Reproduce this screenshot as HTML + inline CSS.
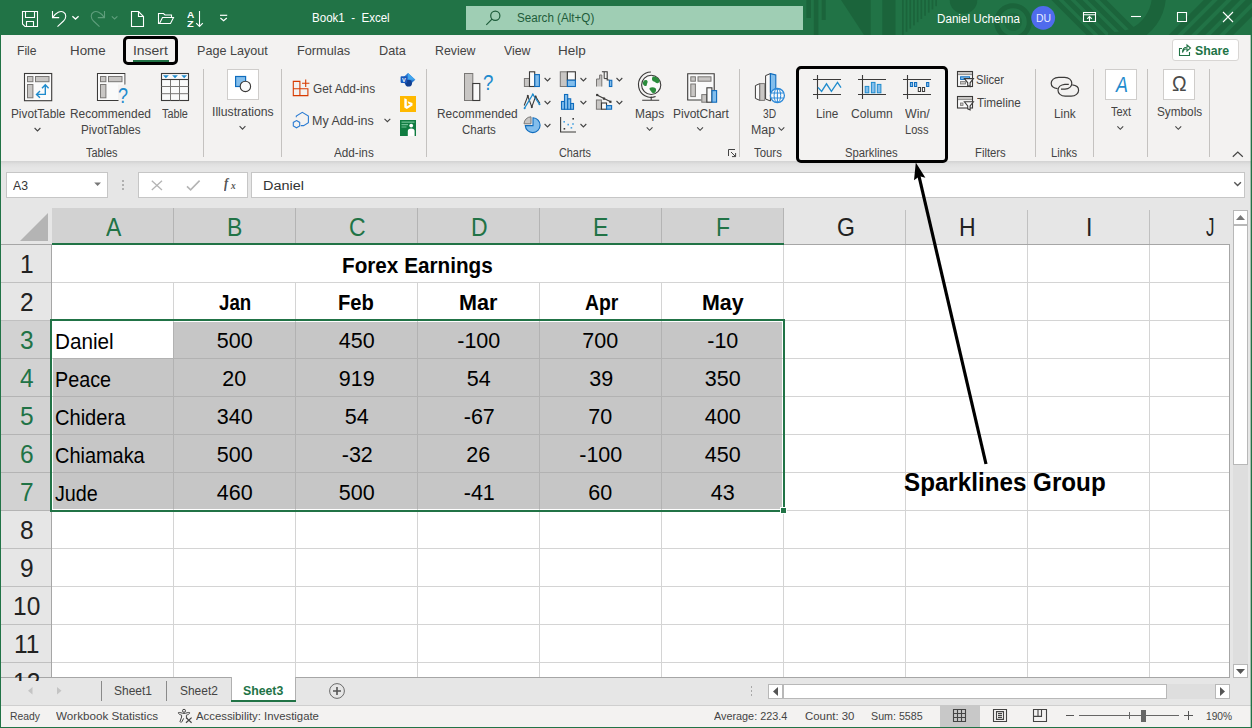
<!DOCTYPE html>
<html lang="en"><head><meta charset="utf-8"><title>Book1 - Excel</title>
<style>
*{box-sizing:border-box;margin:0;padding:0}
html,body{width:1252px;height:728px;overflow:hidden;background:#f3f2f1;font-family:'Liberation Sans',sans-serif}
.a,.t,svg{position:absolute}
.t{white-space:pre;line-height:1;transform-origin:0 0}
svg{overflow:visible}
</style></head>
<body>
<div class="a" style="left:0px;top:0px;width:1252px;height:35px;background:#217346;"></div>
<svg style="left:0;top:0;overflow:hidden" width="1252" height="35" viewBox="0 0 1252 35"><g fill="#1b643b" stroke="none"><rect x="806.4" y="0" width="4.6" height="18"/><rect x="813.8" y="0" width="4.6" height="35"/><rect x="821.7" y="0" width="4" height="20"/><path d="M841 0H870.7V35H864Z"/><rect x="882.3" y="0" width="13.2" height="35"/><rect x="902.0" y="0" width="1.7" height="35.0"/><rect x="905.7" y="0" width="1.7" height="31.8"/><rect x="909.4" y="0" width="1.7" height="28.6"/><rect x="913.1" y="0" width="1.7" height="25.4"/><rect x="916.8" y="0" width="1.7" height="22.2"/><rect x="920.5" y="0" width="1.7" height="19.0"/><rect x="924.2" y="0" width="1.7" height="15.8"/><rect x="927.9" y="0" width="1.7" height="12.6"/><rect x="931.6" y="0" width="1.7" height="9.4"/><rect x="935.3" y="0" width="1.7" height="6.2"/><circle cx="963.5" cy="0" r="13.8"/></g><g fill="none" stroke="#1b643b"><circle cx="1013" cy="22" r="16.3" stroke-width="5"/><circle cx="1013" cy="22" r="6" stroke-width="6" opacity=".6"/><path d="M1153.1 -27A44 44 0 0 1 1107.4 38.3" stroke-width="14"/></g><g fill="none" stroke="#1b643b" stroke-width="5"><path d="M1050 -5L1095 40"/><path d="M1062 -5L1107 40"/><path d="M1074 -5L1119 40"/><path d="M1086 -5L1131 40"/><path d="M1098 -5L1143 40"/></g><g fill="none" stroke="#1b643b" stroke-width="6"><path d="M1168 40L1213 -5"/><path d="M1182 40L1227 -5"/><path d="M1196 40L1241 -5"/><path d="M1210 40L1255 -5"/><path d="M1224 40L1269 -5"/></g></svg>
<div class="a" style="left:466px;top:6px;width:337px;height:24px;background:#9fceb4;"></div>
<div class="a" style="left:0px;top:35px;width:1252px;height:126px;background:#f3f2f1;"></div>
<div class="a" style="left:0px;top:161px;width:1252px;height:47px;background:#e6e6e6;"></div>
<div class="a" style="left:0px;top:161px;width:1252px;height:7px;background:linear-gradient(#d2d2d2,#e0e0e0 45%,#e6e6e6);"></div>
<div class="a" style="left:203px;top:69px;width:1px;height:88px;background:#c4c2c0;"></div>
<div class="a" style="left:281px;top:69px;width:1px;height:88px;background:#c4c2c0;"></div>
<div class="a" style="left:426px;top:69px;width:1px;height:88px;background:#c4c2c0;"></div>
<div class="a" style="left:739px;top:69px;width:1px;height:88px;background:#c4c2c0;"></div>
<div class="a" style="left:1035px;top:69px;width:1px;height:88px;background:#c4c2c0;"></div>
<div class="a" style="left:1093px;top:69px;width:1px;height:88px;background:#c4c2c0;"></div>
<div class="a" style="left:1147px;top:69px;width:1px;height:88px;background:#c4c2c0;"></div>
<div class="a" style="left:1209px;top:69px;width:1px;height:88px;background:#c4c2c0;"></div>
<div class="a" style="left:133px;top:60px;width:36px;height:2px;background:#217346;"></div>
<div class="a" style="left:123px;top:36px;width:55px;height:29px;border:3px solid #000;border-radius:5px"></div>
<div class="a" style="left:796px;top:66px;width:152px;height:97px;border:3px solid #000;border-radius:5px"></div>
<div class="a" style="left:227.2px;top:69.3px;width:31.6px;height:30.4px;background:#fff;border:1px solid #cfcdcb"></div>
<div class="a" style="left:1105.2px;top:69.3px;width:31.6px;height:30.4px;background:#fff;border:1px solid #cfcdcb"></div>
<div class="a" style="left:1163.2px;top:69.3px;width:31.6px;height:30.4px;background:#fff;border:1px solid #cfcdcb"></div>
<div class="a" style="left:1171.8px;top:38.6px;width:66.8px;height:22.8px;background:#fff;border:1px solid #d8d6d4;border-radius:3px"></div>
<div class="a" style="left:6px;top:172px;width:102px;height:26px;background:#fff;border:1px solid #c6c6c6"></div>
<div class="a" style="left:138px;top:172px;width:110px;height:26px;background:#fff;border:1px solid #c6c6c6"></div>
<div class="a" style="left:251px;top:172px;width:994px;height:26px;background:#fff;border:1px solid #c6c6c6"></div>
<div class="a" style="left:122px;top:180px;width:2px;height:2px;background:#b0b0b0;"></div>
<div class="a" style="left:122px;top:184px;width:2px;height:2px;background:#b0b0b0;"></div>
<div class="a" style="left:122px;top:188px;width:2px;height:2px;background:#b0b0b0;"></div>
<div class="a" style="left:52px;top:245px;width:1177px;height:432px;background:#fff;"></div>
<div class="a" style="left:1px;top:208px;width:1229px;height:36px;background:#e6e6e6;"></div>
<div class="a" style="left:1px;top:244px;width:51px;height:433px;background:#e6e6e6;"></div>
<div class="a" style="left:52px;top:208px;width:732px;height:35px;background:#d2d2d2;"></div>
<div class="a" style="left:1px;top:321px;width:50px;height:190px;background:#d2d2d2;"></div>
<div class="a" style="left:53px;top:322px;width:729px;height:187px;background:#c6c6c6;"></div>
<div class="a" style="left:53px;top:322px;width:120px;height:36px;background:#fff;"></div>
<div class="a" style="left:173px;top:245px;width:1px;height:432px;background:#d4d4d4;"></div>
<div class="a" style="left:295px;top:245px;width:1px;height:432px;background:#d4d4d4;"></div>
<div class="a" style="left:417px;top:245px;width:1px;height:432px;background:#d4d4d4;"></div>
<div class="a" style="left:539px;top:245px;width:1px;height:432px;background:#d4d4d4;"></div>
<div class="a" style="left:661px;top:245px;width:1px;height:432px;background:#d4d4d4;"></div>
<div class="a" style="left:783px;top:245px;width:1px;height:432px;background:#d4d4d4;"></div>
<div class="a" style="left:905px;top:245px;width:1px;height:432px;background:#d4d4d4;"></div>
<div class="a" style="left:1027px;top:245px;width:1px;height:432px;background:#d4d4d4;"></div>
<div class="a" style="left:1149px;top:245px;width:1px;height:432px;background:#d4d4d4;"></div>
<div class="a" style="left:52px;top:282px;width:1177px;height:1px;background:#d4d4d4;"></div>
<div class="a" style="left:52px;top:320px;width:1177px;height:1px;background:#d4d4d4;"></div>
<div class="a" style="left:52px;top:358px;width:1177px;height:1px;background:#d4d4d4;"></div>
<div class="a" style="left:52px;top:396px;width:1177px;height:1px;background:#d4d4d4;"></div>
<div class="a" style="left:52px;top:434px;width:1177px;height:1px;background:#d4d4d4;"></div>
<div class="a" style="left:52px;top:472px;width:1177px;height:1px;background:#d4d4d4;"></div>
<div class="a" style="left:52px;top:510px;width:1177px;height:1px;background:#d4d4d4;"></div>
<div class="a" style="left:52px;top:548px;width:1177px;height:1px;background:#d4d4d4;"></div>
<div class="a" style="left:52px;top:586px;width:1177px;height:1px;background:#d4d4d4;"></div>
<div class="a" style="left:52px;top:624px;width:1177px;height:1px;background:#d4d4d4;"></div>
<div class="a" style="left:52px;top:662px;width:1177px;height:1px;background:#d4d4d4;"></div>
<div class="a" style="left:52px;top:245px;width:731px;height:37px;background:#fff;"></div>
<div class="a" style="left:173px;top:322px;width:1px;height:187px;background:#b2b2b2;"></div>
<div class="a" style="left:295px;top:322px;width:1px;height:187px;background:#b2b2b2;"></div>
<div class="a" style="left:417px;top:322px;width:1px;height:187px;background:#b2b2b2;"></div>
<div class="a" style="left:539px;top:322px;width:1px;height:187px;background:#b2b2b2;"></div>
<div class="a" style="left:661px;top:322px;width:1px;height:187px;background:#b2b2b2;"></div>
<div class="a" style="left:53px;top:358px;width:729px;height:1px;background:#b2b2b2;"></div>
<div class="a" style="left:53px;top:396px;width:729px;height:1px;background:#b2b2b2;"></div>
<div class="a" style="left:53px;top:434px;width:729px;height:1px;background:#b2b2b2;"></div>
<div class="a" style="left:53px;top:472px;width:729px;height:1px;background:#b2b2b2;"></div>
<div class="a" style="left:53px;top:358px;width:120px;height:1px;background:#b2b2b2;"></div>
<div class="a" style="left:173px;top:322px;width:1px;height:36px;background:#b2b2b2;"></div>
<div class="a" style="left:173px;top:208px;width:1px;height:35px;background:#b4b4b4;"></div>
<div class="a" style="left:295px;top:208px;width:1px;height:35px;background:#b4b4b4;"></div>
<div class="a" style="left:417px;top:208px;width:1px;height:35px;background:#b4b4b4;"></div>
<div class="a" style="left:539px;top:208px;width:1px;height:35px;background:#b4b4b4;"></div>
<div class="a" style="left:661px;top:208px;width:1px;height:35px;background:#b4b4b4;"></div>
<div class="a" style="left:783px;top:208px;width:1px;height:35px;background:#b4b4b4;"></div>
<div class="a" style="left:905px;top:210px;width:1px;height:34px;background:#c0c0c0;"></div>
<div class="a" style="left:1027px;top:210px;width:1px;height:34px;background:#c0c0c0;"></div>
<div class="a" style="left:1149px;top:210px;width:1px;height:34px;background:#c0c0c0;"></div>
<div class="a" style="left:1px;top:282px;width:50px;height:1px;background:#c0c0c0;"></div>
<div class="a" style="left:1px;top:320px;width:50px;height:1px;background:#c0c0c0;"></div>
<div class="a" style="left:1px;top:358px;width:50px;height:1px;background:#b4b4b4;"></div>
<div class="a" style="left:1px;top:396px;width:50px;height:1px;background:#b4b4b4;"></div>
<div class="a" style="left:1px;top:434px;width:50px;height:1px;background:#b4b4b4;"></div>
<div class="a" style="left:1px;top:472px;width:50px;height:1px;background:#b4b4b4;"></div>
<div class="a" style="left:1px;top:510px;width:50px;height:1px;background:#b4b4b4;"></div>
<div class="a" style="left:1px;top:548px;width:50px;height:1px;background:#c0c0c0;"></div>
<div class="a" style="left:1px;top:586px;width:50px;height:1px;background:#c0c0c0;"></div>
<div class="a" style="left:1px;top:624px;width:50px;height:1px;background:#c0c0c0;"></div>
<div class="a" style="left:1px;top:662px;width:50px;height:1px;background:#c0c0c0;"></div>
<div class="a" style="left:51px;top:244px;width:1px;height:433px;background:#a6a6a6;"></div>
<div class="a" style="left:784px;top:244px;width:446px;height:1px;background:#a6a6a6;"></div>
<div class="a" style="left:1px;top:244px;width:50px;height:1px;background:#a6a6a6;"></div>
<div class="a" style="left:1229px;top:244px;width:1px;height:434px;background:#a6a6a6;"></div>
<div class="a" style="left:1px;top:677px;width:1229px;height:1px;background:#a6a6a6;"></div>
<div class="a" style="left:52px;top:243px;width:732px;height:2px;background:#217346;"></div>
<div class="a" style="left:50px;top:321px;width:2px;height:190px;background:#217346;"></div>
<svg style="left:20px;top:213px" width="28" height="28"><path d="M28 0V28H0Z" fill="#b4b4b4"/></svg>
<div class="a" style="left:50px;top:319px;width:735px;height:2px;background:#217346;"></div>
<div class="a" style="left:50px;top:319px;width:2px;height:193px;background:#217346;"></div>
<div class="a" style="left:783px;top:319px;width:2px;height:188px;background:#217346;"></div>
<div class="a" style="left:50px;top:510px;width:730px;height:2px;background:#217346;"></div>
<div class="a" style="left:780px;top:507px;width:7px;height:7px;background:#fff;"></div>
<div class="a" style="left:781px;top:508px;width:5px;height:5px;background:#217346;"></div>
<div class="a" style="left:1230px;top:208px;width:21px;height:470px;background:#e6e6e6;"></div>
<div class="a" style="left:1233px;top:225px;width:15px;height:440px;background:#dedede;"></div>
<div class="a" style="left:1233px;top:210px;width:15px;height:15px;background:#fff;border:1px solid #b8b8b8"></div>
<div class="a" style="left:1233px;top:225px;width:15px;height:240px;background:#fff;border:1px solid #b8b8b8"></div>
<div class="a" style="left:1233px;top:664px;width:15px;height:14px;background:#fff;border:1px solid #b8b8b8"></div>
<svg style="left:1236px;top:215px" width="9" height="5"><path d="M0 5L4.5 0L9 5Z" fill="#777"/></svg>
<svg style="left:1236px;top:669px" width="9" height="5"><path d="M0 0L4.5 5L9 0Z" fill="#555"/></svg>
<div class="a" style="left:1px;top:678px;width:1250px;height:27px;background:#e6e6e6;"></div>
<div class="a" style="left:231px;top:677px;width:65px;height:24px;background:#fff;border-left:1px solid #b0b0b0;border-right:1px solid #b0b0b0"></div>
<div class="a" style="left:231px;top:700px;width:65px;height:2px;background:#217346;"></div>
<div class="a" style="left:101px;top:681px;width:1px;height:20px;background:#8a8a8a;"></div>
<div class="a" style="left:166px;top:681px;width:1px;height:20px;background:#8a8a8a;"></div>
<div class="a" style="left:750.5px;top:686.3px;width:1.6px;height:1.8px;background:#a8a8a8;"></div>
<div class="a" style="left:750.5px;top:690.3px;width:1.6px;height:1.8px;background:#a8a8a8;"></div>
<div class="a" style="left:750.5px;top:694.3px;width:1.6px;height:1.8px;background:#a8a8a8;"></div>
<div class="a" style="left:768px;top:684px;width:15px;height:15px;background:#fff;border:1px solid #b8b8b8"></div>
<div class="a" style="left:783px;top:684px;width:384px;height:15px;background:#fff;border:1px solid #b8b8b8"></div>
<div class="a" style="left:1167px;top:684px;width:48px;height:15px;background:#dedede;"></div>
<div class="a" style="left:1215px;top:684px;width:15px;height:15px;background:#fff;border:1px solid #b8b8b8"></div>
<svg style="left:773px;top:687px" width="5" height="9"><path d="M5 0L0 4.5L5 9Z" fill="#555"/></svg>
<svg style="left:1220px;top:687px" width="5" height="9"><path d="M0 0L5 4.5L0 9Z" fill="#555"/></svg>
<svg style="left:27.6px;top:686.6px" width="5" height="8"><path d="M4.5 0L0 3.8L4.5 7.6Z" fill="#c4c4c4"/></svg>
<svg style="left:56.6px;top:686.6px" width="5" height="8"><path d="M0 0L4.5 3.8L0 7.6Z" fill="#c4c4c4"/></svg>
<svg style="left:329px;top:683px" width="16" height="16"><circle cx="8" cy="8" r="7.4" fill="none" stroke="#6a6a6a" stroke-width="1"/><path d="M4 8H12M8 4V12" stroke="#555" stroke-width="1.6"/></svg>
<div class="a" style="left:1px;top:705px;width:1250px;height:22px;background:#f3f2f1;"></div>
<div class="a" style="left:1px;top:705px;width:1250px;height:1px;background:#cfcfcf;"></div>
<div class="a" style="left:940px;top:705px;width:40px;height:22px;background:#c8c8c8;"></div>
<div class="a" style="left:1079px;top:715px;width:100px;height:1px;background:#666;"></div>
<div class="a" style="left:1129px;top:712px;width:1px;height:7px;background:#666;"></div>
<div class="a" style="left:1141px;top:710px;width:5px;height:12px;background:#666;"></div>
<div class="a" style="left:1066px;top:715px;width:8px;height:1px;background:#555;"></div>
<div class="a" style="left:1184px;top:715px;width:9px;height:1px;background:#555;"></div>
<div class="a" style="left:1188px;top:711px;width:1px;height:9px;background:#555;"></div>
<div class="a" style="left:0px;top:35px;width:1px;height:693px;background:#217346;"></div>
<div class="a" style="left:1251px;top:35px;width:1px;height:693px;background:#217346;"></div>
<div class="a" style="left:1250px;top:35px;width:1px;height:693px;background:rgba(33,115,70,.35);"></div>
<div class="a" style="left:0px;top:727px;width:1252px;height:1px;background:#217346;"></div>
<svg style="left:0;top:0" width="1252" height="728"><path d="M986 464L918.6 174.5" stroke="#000" stroke-width="3.2" fill="none"/><path d="M915.8 162.5L925.4 177.8L919.6 176.2L914 180.2Z" fill="#000"/></svg>
<svg style="left:0;top:0" width="1252" height="728" viewBox="0 0 1252 728" fill="none">
<g stroke="#fff" stroke-width="1.1" fill="none">
<path d="M22.5 11.5H37.5V26.5H25L22.5 24Z"/><path d="M25.5 11.5V17.5H34.5V11.5"/><path d="M26.5 26.5V21.5H33.5V26.5"/>
<path d="M52.5 11V17.6H59.2"/><path d="M52.8 17.4C56 12.5 60.5 10.4 63.6 12.2C66.6 14 66.4 18 63.5 21L57.5 26.6"/>
<path d="M72.4 16.3L75.5 19.1L78.60000000000001 16.3" fill="none" stroke="#fff" stroke-width="1.3"/>
<path d="M131.5 11.5H138.5L143.5 16.5V26.5H131.5Z"/><path d="M138.5 11.5V16.5H143.5"/>
<path d="M160 23.5H158.5V13.5H163.5L165 15H171.5V17.5"/><path d="M159.5 23.5L162.5 17.5H173.5L170.5 23.5Z"/>
<path d="M199.5 11V26.4M196.2 23.2L199.5 26.5L202.8 23.2"/>
<path d="M220 15.3H227.2" stroke-width="1.2"/><path d="M220.4 18L223.6 20.8L226.8 18" fill="none" stroke="#fff" stroke-width="1.2"/>
</g>
<g stroke="#5f9e7c" stroke-width="1.1" fill="none"><path d="M104.5 11V17.6H97.8"/><path d="M104.2 17.4C101 12.5 96.5 10.4 93.4 12.2C90.4 14 90.6 18 93.5 21L99.5 26.6"/><path d="M111.8 16.3L114.6 18.900000000000002L117.39999999999999 16.3" fill="none" stroke="#5f9e7c" stroke-width="1.1"/></g>
<g stroke="#1e5c3a" stroke-width="1.2"><circle cx="495.3" cy="15.8" r="4.6"/><path d="M492 19.2L486.3 24.9"/></g>
<circle cx="1043.2" cy="17.8" r="11.9" fill="#4f6bed"/>
<g stroke="#fff" stroke-width="1.1"><path d="M1083.5 12.5H1095.5V21.5H1083.5Z"/><path d="M1083.5 14.7H1095.5M1089.5 21.5V16.6M1087.2 18.8L1089.5 16.5L1091.8 18.8"/>
<path d="M1131 16.5H1141"/><path d="M1177.5 12.5H1186.5V21.5H1177.5Z"/><path d="M1223 12L1233 22M1233 12L1223 22"/></g>
<g stroke="#217346" stroke-width="1.1"><path d="M1182 48.5H1179.5V55.5H1189.5V52"/><path d="M1182.5 52.5C1182.5 49 1184.5 47.3 1187 47.3V45L1190.5 48L1187 51V48.8C1185 48.8 1183.5 49.8 1182.5 52.5Z"/></g>
<rect x="24.5" y="73.5" width="27.2" height="27.2" fill="#fafafa" stroke="#3b3a39" stroke-width="1.1"/><g fill="#c8c6c4" stroke="#797775" stroke-width="1"><rect x="27.5" y="76.5" width="5.4" height="5.2"/><rect x="35.5" y="76.5" width="13.5" height="5.2"/><rect x="27.5" y="84.5" width="5.4" height="13.3"/></g>
<path d="M45.3 85V94.4H36.6M42 88.2L45.3 84.8L48.6 88.2M40 91L36.5 94.4L40 97.8" stroke="#1e8bcd" stroke-width="1.4"/>
<path d="M124.8 84.5V73.5H97.5V100.5H118.5" fill="none" stroke="#3b3a39" stroke-width="1.1"/><path d="M98 74H124.3V84.5H118V100H98Z" fill="#fafafa"/>
<g fill="#c8c6c4" stroke="#797775" stroke-width="1"><rect x="100.5" y="76.5" width="5.4" height="5.2"/><rect x="108.5" y="76.5" width="13.5" height="5.2"/><rect x="100.5" y="84.5" width="5.4" height="13.3"/></g>
<rect x="161.5" y="73.5" width="27" height="27" fill="#fafafa" stroke="#3b3a39" stroke-width="1.1"/>
<path d="M161.5 86.5H188.5M161.5 93.7H188.5M170.5 79.5V100.5M179.5 79.5V100.5" stroke="#797775" stroke-width="1"/><path d="M161.5 79.5H188.5" stroke="#3b3a39" stroke-width="1.1"/>
<path d="M163.0 75.2H168.8L165.9 78.2Z" fill="#1e8bcd"/>
<path d="M172.1 75.2H177.9L175 78.2Z" fill="#1e8bcd"/>
<path d="M181.29999999999998 75.2H187.1L184.2 78.2Z" fill="#1e8bcd"/>
<path d="M34.6 128L37.5 130.9L40.4 128" fill="none" stroke="#444" stroke-width="1.1"/>
<path d="M239.6 126.2L242.5 129.1L245.4 126.2" fill="none" stroke="#444" stroke-width="1.1"/>
<path d="M646.7 127.4L649.6 130.3L652.5 127.4" fill="none" stroke="#444" stroke-width="1.1"/>
<path d="M697.2 127.4L700.1 130.3L703.0 127.4" fill="none" stroke="#444" stroke-width="1.1"/>
<path d="M1117.4 126.4L1120.3000000000002 129.3L1123.2 126.4" fill="none" stroke="#444" stroke-width="1.1"/>
<path d="M1175.4 126.4L1178.3000000000002 129.3L1181.2 126.4" fill="none" stroke="#444" stroke-width="1.1"/>
<path d="M778.5 127.4L781.4 130.3L784.3 127.4" fill="none" stroke="#444" stroke-width="1.1"/>
<path d="M384.5 118.8L387.4 121.7L390.3 118.8" fill="none" stroke="#444" stroke-width="1.1"/>
<path d="M544.6 78L547.5 80.9L550.4 78" fill="none" stroke="#444" stroke-width="1.1"/>
<path d="M544.6 101L547.5 103.9L550.4 101" fill="none" stroke="#444" stroke-width="1.1"/>
<path d="M580.5 78L583.4 80.9L586.3 78" fill="none" stroke="#444" stroke-width="1.1"/>
<path d="M580.5 101L583.4 103.9L586.3 101" fill="none" stroke="#444" stroke-width="1.1"/>
<path d="M616.5 78L619.4 80.9L622.3 78" fill="none" stroke="#444" stroke-width="1.1"/>
<path d="M616.5 101L619.4 103.9L622.3 101" fill="none" stroke="#444" stroke-width="1.1"/>
<path d="M544.6 124L547.5 126.9L550.4 124" fill="none" stroke="#444" stroke-width="1.1"/>
<path d="M580.5 124L583.4 126.9L586.3 124" fill="none" stroke="#444" stroke-width="1.1"/>
<rect x="235.6" y="76.5" width="10" height="10" fill="#83beec" stroke="#0f6cbd" stroke-width="1.2"/><circle cx="245.4" cy="86.4" r="5.2" fill="#fafafa" stroke="#3b3a39" stroke-width="1.1"/>
<path d="M293.3 81.4H299.9V95.6H293.3ZM293.3 88.8H307.9V95.6H299.9" stroke="#d83b01" stroke-width="1.1"/><path d="M305.7 79.6V87M302 83.3H309.4" stroke="#d83b01" stroke-width="1.1"/>
<path d="M296.3 117.2V116L302.3 112.3L308.4 116V122.6L303.6 125.6H300.8" stroke="#2b7cd3" stroke-width="1.1"/><path d="M296.5 120.6L299.7 122.4V126L296.5 127.8L293.3 126V122.4Z" stroke="#2b7cd3" stroke-width="1.1"/>
<path d="M408 73L415.3 79.8L408 86.5L400.8 79.8Z" fill="#2b7cd3"/><path d="M408 73L415.3 79.8H408Z" fill="#41a5ee"/><circle cx="408.6" cy="83.2" r="3.4" fill="#103f91"/><rect x="400.6" y="76.3" width="6.6" height="6.6" rx=".8" fill="#185abd"/>
<rect x="400" y="96" width="16" height="16" fill="#ffb900"/><path d="M404.3 98.3L406.8 99.2V106.3L410.2 104.5L408.4 103.6L407.5 101.2L412.5 103V105.6L406.8 109L404.3 107.6Z" fill="#fff"/>
<rect x="400" y="120" width="16" height="16" fill="#107c41"/><path d="M401.5 122.2H414.5M401.5 124.6H408M401.5 127H406.5" stroke="#6fbf93" stroke-width="1.2"/><circle cx="411.2" cy="125.6" r="1.9" fill="#fff"/><path d="M407.8 136V131C407.8 129.3 409 128.4 411.2 128.4C413.4 128.4 414.6 129.3 414.6 131V136Z" fill="#fff"/>
<rect x="464.5" y="73.5" width="8.3" height="27" fill="#c8c6c4" stroke="#797775" stroke-width="1"/><rect x="472.8" y="83.5" width="7" height="17" fill="#fafafa" stroke="#3b3a39" stroke-width="1.1"/>
<rect x="524.4" y="78.5" width="5" height="8" fill="#c8c6c4" stroke="#797775"/><rect x="529.5" y="71.8" width="5.2" height="14.7" fill="#fafafa" stroke="#3b3a39" stroke-width="1.1"/><rect x="534.8" y="74.6" width="4.6" height="11.9" fill="#83beec" stroke="#0f6cbd" stroke-width="1.1"/>
<rect x="560.3" y="71.8" width="7" height="14.7" fill="#c8c6c4" stroke="#797775"/><rect x="567.4" y="71.8" width="8" height="8.4" fill="#fafafa" stroke="#3b3a39" stroke-width="1.1"/><rect x="567.4" y="80.2" width="8" height="6.3" fill="#83beec" stroke="#0f6cbd" stroke-width="1.1"/>
<path d="M596.5 86.5V79H599.6V75H601.8V86.5" stroke="#797775" stroke-width="1" fill="#c8c6c4"/><path d="M601.9 71.8H607.2V80H609.3" stroke="#3b3a39" stroke-width="1.1"/><path d="M604.2 71.8V78.6H607.2" stroke="#3b3a39" stroke-width="1"/><rect x="609.4" y="80.3" width="2.4" height="6.2" fill="#83beec" stroke="#0f6cbd" stroke-width="1.1"/>
<path d="M524.2 105.5L527.8 96L531.8 107L535.6 96.6L539.8 103.2" stroke="#3b3a39" stroke-width="1.1"/><path d="M524.4 108.4L532.8 94.4L539.6 104.4" stroke="#1e8bcd" stroke-width="1.2"/>
<rect x="526.9" y="95.1" width="1.8" height="1.8" fill="#3b3a39"/>
<rect x="530.9" y="106.1" width="1.8" height="1.8" fill="#3b3a39"/>
<rect x="534.7" y="95.69999999999999" width="1.8" height="1.8" fill="#3b3a39"/>
<circle cx="524.6" cy="108.2" r="1" fill="#1e8bcd"/>
<circle cx="532.8" cy="94.6" r="1" fill="#1e8bcd"/>
<circle cx="539.5" cy="104.2" r="1" fill="#1e8bcd"/>
<g fill="#83beec" stroke="#0f6cbd" stroke-width="1.1"><rect x="561.5" y="101.5" width="3" height="7.8"/><rect x="564.5" y="94.5" width="3.2" height="14.8"/><rect x="567.7" y="98.8" width="3" height="10.5"/><rect x="570.7" y="103.5" width="2.8" height="5.8"/></g>
<rect x="596.4" y="100" width="5" height="9.2" fill="#c8c6c4" stroke="#797775"/><rect x="601.5" y="103" width="5" height="6.2" fill="#fafafa" stroke="#3b3a39" stroke-width="1.1"/><rect x="606.6" y="105.6" width="5" height="3.6" fill="#83beec" stroke="#0f6cbd" stroke-width="1.1"/><path d="M597 95L604 98.6L610.6 101.8" stroke="#3b3a39" stroke-width="1.1"/>
<rect x="596.1" y="93.9" width="2.2" height="2.2" fill="#3b3a39"/>
<rect x="602.9" y="97.5" width="2.2" height="2.2" fill="#3b3a39"/>
<rect x="609.3" y="100.7" width="2.2" height="2.2" fill="#3b3a39"/>
<path d="M533 117.8A7.4 7.4 0 1 1 525.3 125.6H533Z" fill="#83beec" stroke="#0f6cbd" stroke-width="1.1"/><path d="M531 116.8A7.2 7.2 0 0 0 524 123.8H531Z" fill="#c8c6c4" stroke="#797775" stroke-width="1"/>
<path d="M560.6 117V132H576" stroke="#3b3a39" stroke-width="1.1"/>
<rect x="572.4000000000001" y="118.0" width="1.6" height="1.6" fill="#3b3a39"/>
<rect x="563.6" y="128.0" width="1.6" height="1.6" fill="#3b3a39"/>
<rect x="563.4000000000001" y="121.0" width="1.6" height="1.6" fill="#4aa3e0"/>
<rect x="567.4000000000001" y="123.8" width="1.6" height="1.6" fill="#4aa3e0"/>
<rect x="570.6" y="127.0" width="1.6" height="1.6" fill="#4aa3e0"/>
<rect x="572.2" y="123.2" width="1.6" height="1.6" fill="#4aa3e0"/>
<circle cx="651.2" cy="84.9" r="9.6" fill="#fafafa" stroke="#3b3a39" stroke-width="1.1"/>
<path d="M644 80.5C645.5 79.5 647 80 647.6 81.2C648 82.6 646.5 84 646.8 85.6C646 86.4 644.2 86 643.3 84.8C642.6 83.4 643 81.6 644 80.5Z" fill="#2a8c3c"/><path d="M652.6 76.6C655 76 658 77.4 659.4 80C660 81.6 659.2 83 657.6 83.2C656 83.4 655.4 82 654 81.6C652.6 81 651.8 79.8 652 78.4Z" fill="#2a8c3c"/><path d="M649.6 88C651.4 86.8 654 87 655.6 88.2C656.6 89.6 656.2 91.6 654.8 92.8C653.4 93.6 652 93 651.2 91.6C650.6 90.4 649 89.6 649.6 88Z" fill="#2a8c3c"/>
<path d="M650.9 72A12.7 12.7 0 1 0 655.6 96.6" stroke="#3b3a39" stroke-width="1.1"/><path d="M651.2 96.6V100.2M642.2 100.3H659.2" stroke="#3b3a39" stroke-width="1.1"/>
<path d="M701.5 100H687.7V73.8H714.2V90" fill="#fafafa" stroke="#3b3a39" stroke-width="1.1"/>
<g fill="#c8c6c4" stroke="#797775" stroke-width="1"><rect x="690.8" y="76.8" width="4.6" height="4.4"/><rect x="698" y="76.8" width="13" height="4.4"/><rect x="690.8" y="84" width="4.6" height="12.6"/></g>
<rect x="701.8" y="94.6" width="5" height="7.6" fill="#c8c6c4" stroke="#797775"/><rect x="706.9" y="87.8" width="5" height="14.4" fill="#fafafa" stroke="#3b3a39" stroke-width="1.1"/><rect x="712" y="90.6" width="4.6" height="11.6" fill="#83beec" stroke="#0f6cbd" stroke-width="1.1"/>
<path d="M728.5 156V149.5H735M731 152L735.5 156.5M735.6 153V156.6H732" stroke="#444" stroke-width="1"/>
<path d="M755.4 85.6L759.8 83.6V100.4L755.4 98.4Z" fill="#fafafa" stroke="#3b3a39" stroke-width="1"/><path d="M759.8 83.6H764.8V100.4H759.8Z" fill="#c8c6c4" stroke="#797775" stroke-width="1"/>
<path d="M765.6 75.6L770.4 73.6V101L765.6 99Z" fill="#fafafa" stroke="#3b3a39" stroke-width="1"/><path d="M770.4 73.6L775.8 75V92H770.4Z" fill="#83beec" stroke="#0f6cbd" stroke-width="1.1"/>
<circle cx="777.4" cy="95.5" r="7" fill="#fafafa" stroke="#2b88d8" stroke-width="1.3"/><ellipse cx="777.4" cy="95.5" rx="3.3" ry="7" stroke="#2b88d8" stroke-width="1"/><path d="M771 93H783.8M771 98H783.8M777.4 88.5V102.5" stroke="#2b88d8" stroke-width="1"/>
<path d="M813 79.5H841M813 94.5H841M817.5 75V99" stroke="#3b3a39" stroke-width="1.1"/>
<path d="M858 79.5H886M858 94.5H886M862.5 75V99" stroke="#3b3a39" stroke-width="1.1"/>
<path d="M903 79.5H931M903 94.5H931M907.5 75V99" stroke="#3b3a39" stroke-width="1.1"/>
<path d="M818 87.4L821.6 91.4L826.5 83.8L831.4 91.4L837.5 82.4L841 87.6" stroke="#1e8bcd" stroke-width="1.3"/>
<g fill="#83beec" stroke="#1e8bcd" stroke-width="1"><rect x="865.2" y="86.4" width="3.6" height="6.4"/><rect x="871.4" y="82.4" width="3.6" height="10.4"/><rect x="877.3" y="84.4" width="3.6" height="8.4"/></g>
<g stroke="#0f6cbd" stroke-width="1" fill="#83beec"><rect x="910.4" y="82.5" width="2.2" height="4"/><rect x="914.5" y="82.5" width="2.2" height="4"/><rect x="926.6" y="82.5" width="2.2" height="4"/></g><g stroke="#3b3a39" stroke-width="1" fill="#fafafa"><rect x="918.3" y="87.5" width="2.2" height="4"/><rect x="922.4" y="87.5" width="2.2" height="4"/></g>
<rect x="957.5" y="71.5" width="15" height="15" fill="#fafafa" stroke="#3b3a39" stroke-width="1.1"/><rect x="958" y="72" width="14" height="2.4" fill="#c8c6c4"/><path d="M958 74.6H972" stroke="#797775" stroke-width=".8"/><rect x="960.6" y="76.8" width="9" height="2.6" fill="#83beec" stroke="#0f6cbd" stroke-width="1"/><rect x="960.6" y="81.6" width="5" height="2.4" fill="#c8c6c4" stroke="#797775" stroke-width=".8"/>
<path d="M964.4 78.6H973.4L970.1 82.8V86.6L967.6999999999999 85.6V82.8Z" fill="#fafafa" stroke="#3b3a39" stroke-width="1.1"/>
<rect x="957.5" y="96.5" width="15" height="11.5" fill="#fafafa" stroke="#3b3a39" stroke-width="1.1"/><rect x="958" y="97" width="14" height="2.4" fill="#c8c6c4"/><path d="M958 99.6H972" stroke="#797775" stroke-width=".8"/><rect x="960.6" y="103" width="2.4" height="2.4" fill="#c8c6c4" stroke="#797775" stroke-width=".8"/>
<path d="M964.4 101.8H973.4L970.1 106.0V109.8L967.6999999999999 108.8V106.0Z" fill="#fafafa" stroke="#3b3a39" stroke-width="1.1"/>
<path d="M1057.5 88.6C1053.5 88.2 1051.2 86 1051.2 83.3C1051.2 80 1054.2 77.4 1058.6 77.4H1064.6C1069 77.4 1071.8 80 1071.8 83.3C1071.8 86.4 1069 88.9 1065 89.2H1061" stroke="#3b3a39" stroke-width="1.2"/><path d="M1072.2 84.9C1076.2 85.3 1078.6 87.5 1078.6 90.2C1078.6 93.5 1075.6 96.1 1071.2 96.1H1065.2C1060.8 96.1 1058 93.5 1058 90.2C1058 87.1 1060.8 84.6 1064.8 84.3H1068.8" stroke="#3b3a39" stroke-width="1.2"/>
<path d="M1232.8 156.8L1237.8 152L1242.8 156.8" stroke="#444" stroke-width="1.2"/>
<path d="M151.8 180.8L162 190M162 180.8L151.8 190" stroke="#b4b4b4" stroke-width="1.3"/><path d="M187 186.4L190.6 189.8L199.6 180.6" stroke="#b4b4b4" stroke-width="1.6"/>
<path d="M94.2 182.5H101L97.6 186Z" fill="#777"/>
<path d="M1234.3 182.3L1237.6 185.6L1240.9 182.3" stroke="#555" stroke-width="1.4"/>
<g stroke="#444" stroke-width="1.1"><path d="M953.5 709.5H965.5V721.5H953.5ZM957.5 709.5V721.5M961.5 709.5V721.5M953.5 713.5H965.5M953.5 717.5H965.5"/>
<path d="M993.5 709.5H1006.5V721.5H993.5ZM996.5 711.6H1003.5V719.4H996.5ZM998 713.6H1002M998 715.5H1002M998 717.4H1002"/>
<path d="M1033.5 709.5H1046.5V721.5H1033.5ZM1038 709.5V716.4M1041.5 709.5V716.4H1033.5"/></g>
<g stroke="#444" stroke-width="1"><circle cx="184" cy="710.8" r="1.5"/><path d="M178.4 712.6C180 712 181.6 713.4 184 713.4C186.4 713.4 188 712 189.6 712.6C190.2 713.6 188 714.6 186.4 715.2V717L187.4 719M181.6 715.2C180 714.6 177.8 713.6 178.4 712.6M181.6 715.2V717L180 721.6C180.6 722.6 181.6 722.4 182 721.6L183.6 718.4"/><path d="M186 717.6L191.6 722.8M191.6 717.6L186 722.8" stroke-width="1.2"/></g>
</svg>
<span class="t" style="left:311.61px;top:11.00px;font-size:13px;color:#fff;transform:scaleX(0.8886);">Book1  -  Excel</span>
<span class="t" style="left:516.50px;top:12.00px;font-size:12.5px;color:#1e5c3a;transform:scaleX(0.9306);">Search (Alt+Q)</span>
<span class="t" style="left:936.77px;top:13.00px;font-size:12.5px;color:#fff;transform:scaleX(0.9319);">Daniel Uchenna</span>
<span class="t" style="left:1035.90px;top:13.00px;font-size:10.5px;color:#e8ebff;transform:scaleX(0.9943);">DU</span>
<span class="t" style="left:17.07px;top:44.00px;font-size:13px;color:#444;transform:scaleX(0.9332);">File</span>
<span class="t" style="left:69.57px;top:44.00px;font-size:13px;color:#444;transform:scaleX(1.0255);">Home</span>
<span class="t" style="left:132.63px;top:44.00px;font-size:13px;color:#444;transform:scaleX(1.0721);">Insert</span>
<span class="t" style="left:197.03px;top:44.00px;font-size:13px;color:#444;transform:scaleX(0.9683);">Page Layout</span>
<span class="t" style="left:297.12px;top:44.00px;font-size:13px;color:#444;transform:scaleX(0.9799);">Formulas</span>
<span class="t" style="left:379.22px;top:44.00px;font-size:13px;color:#444;transform:scaleX(0.9769);">Data</span>
<span class="t" style="left:435.25px;top:44.00px;font-size:13px;color:#444;transform:scaleX(0.9471);">Review</span>
<span class="t" style="left:504.10px;top:44.00px;font-size:13px;color:#444;transform:scaleX(0.9491);">View</span>
<span class="t" style="left:558.36px;top:44.00px;font-size:13px;color:#444;transform:scaleX(1.0390);">Help</span>
<span class="t" style="left:1195.20px;top:44.00px;font-size:13px;color:#217346;transform:scaleX(0.9471);font-weight:700;">Share</span>
<span class="t" style="left:10.64px;top:108.00px;font-size:12.3px;color:#444;transform:scaleX(0.9589);">PivotTable</span>
<span class="t" style="left:69.63px;top:108.00px;font-size:12.3px;color:#444;transform:scaleX(0.9703);">Recommended</span>
<span class="t" style="left:80.55px;top:124.00px;font-size:12.3px;color:#444;transform:scaleX(0.9460);">PivotTables</span>
<span class="t" style="left:162.10px;top:108.00px;font-size:12.3px;color:#444;transform:scaleX(0.8796);">Table</span>
<span class="t" style="left:86.20px;top:147.00px;font-size:12.3px;color:#444;transform:scaleX(0.8871);">Tables</span>
<span class="t" style="left:211.71px;top:106.00px;font-size:12.3px;color:#444;transform:scaleX(0.9911);">Illustrations</span>
<span class="t" style="left:312.60px;top:83.00px;font-size:12.3px;color:#444;transform:scaleX(0.9663);">Get Add-ins</span>
<span class="t" style="left:311.59px;top:115.00px;font-size:12.3px;color:#444;transform:scaleX(1.0140);">My Add-ins</span>
<span class="t" style="left:334.20px;top:147.00px;font-size:12.3px;color:#444;transform:scaleX(0.9532);">Add-ins</span>
<span class="t" style="left:436.73px;top:108.00px;font-size:12.3px;color:#444;transform:scaleX(0.9679);">Recommended</span>
<span class="t" style="left:461.50px;top:124.00px;font-size:12.3px;color:#444;transform:scaleX(0.9343);">Charts</span>
<span class="t" style="left:558.90px;top:147.00px;font-size:12.3px;color:#444;transform:scaleX(0.8816);">Charts</span>
<span class="t" style="left:634.83px;top:108.00px;font-size:12.3px;color:#444;transform:scaleX(0.9716);">Maps</span>
<span class="t" style="left:672.53px;top:108.00px;font-size:12.3px;color:#444;transform:scaleX(0.9738);">PivotChart</span>
<span class="t" style="left:762.60px;top:108.00px;font-size:12.3px;color:#444;transform:scaleX(0.8334);">3D</span>
<span class="t" style="left:750.59px;top:124.00px;font-size:12.3px;color:#444;transform:scaleX(1.0094);">Map</span>
<span class="t" style="left:754.20px;top:147.00px;font-size:12.3px;color:#444;transform:scaleX(0.9258);">Tours</span>
<span class="t" style="left:815.85px;top:108.00px;font-size:12.3px;color:#444;transform:scaleX(0.9549);">Line</span>
<span class="t" style="left:850.80px;top:108.00px;font-size:12.3px;color:#444;transform:scaleX(0.9851);">Column</span>
<span class="t" style="left:904.50px;top:108.00px;font-size:12.3px;color:#444;transform:scaleX(1.0049);">Win/</span>
<span class="t" style="left:904.70px;top:124.00px;font-size:12.3px;color:#444;transform:scaleX(0.9023);">Loss</span>
<span class="t" style="left:845.20px;top:147.00px;font-size:12.3px;color:#444;transform:scaleX(0.9168);">Sparklines</span>
<span class="t" style="left:976.20px;top:74.00px;font-size:12.3px;color:#444;transform:scaleX(0.9134);">Slicer</span>
<span class="t" style="left:977.10px;top:97.00px;font-size:12.3px;color:#444;transform:scaleX(0.9530);">Timeline</span>
<span class="t" style="left:974.88px;top:147.00px;font-size:12.3px;color:#444;transform:scaleX(0.9188);">Filters</span>
<span class="t" style="left:1053.74px;top:108.00px;font-size:12.3px;color:#444;transform:scaleX(0.9594);">Link</span>
<span class="t" style="left:1050.89px;top:147.00px;font-size:12.3px;color:#444;transform:scaleX(0.9108);">Links</span>
<span class="t" style="left:1110.70px;top:106.00px;font-size:12.3px;color:#444;transform:scaleX(0.8947);">Text</span>
<span class="t" style="left:1156.50px;top:106.00px;font-size:12.3px;color:#444;transform:scaleX(0.9574);">Symbols</span>
<span class="t" style="left:13.30px;top:180.00px;font-size:12px;color:#333;transform:scaleX(1.0197);">A3</span>
<span class="t" style="left:262.64px;top:180.00px;font-size:12.5px;color:#333;transform:scaleX(1.1557);">Daniel</span>
<span class="t" style="left:224.40px;top:177.00px;font-size:14px;color:#555;transform:scaleX(0.9000);font-weight:700;font-style:italic;font-family:'Liberation Serif',serif;">f</span>
<span class="t" style="left:230.53px;top:181.00px;font-size:10px;color:#555;transform:scaleX(0.9333);font-weight:700;font-style:italic;font-family:'Liberation Serif',serif;">x</span>
<span class="t" style="left:482.50px;top:72.00px;font-size:22px;color:#1e8bcd;transform:scaleX(0.8500);">?</span>
<span class="t" style="left:117.50px;top:85.00px;font-size:22px;color:#1e8bcd;transform:scaleX(0.8167);">?</span>
<span class="t" style="left:1172.10px;top:73.00px;font-size:22px;color:#4a4a4a;transform:scaleX(0.8875);">Ω</span>
<span class="t" style="left:1116.42px;top:74.00px;font-size:22px;color:#1e8bcd;transform:scaleX(0.8125);font-style:italic;">A</span>
<span class="t" style="left:187.00px;top:11.00px;font-size:8.5px;color:#fff;transform:scaleX(1.1833);font-weight:700;">A</span>
<span class="t" style="left:187.20px;top:20.00px;font-size:8.5px;color:#fff;transform:scaleX(1.2800);font-weight:700;">Z</span>
<span class="t" style="left:402.00px;top:78.00px;font-size:5.5px;color:#fff;transform:scaleX(1.0250);font-weight:700;">V</span>
<span class="t" style="left:105.78px;top:215.00px;font-size:25px;color:#217346;transform:scaleX(0.9200);">A</span>
<span class="t" style="left:227.32px;top:215.00px;font-size:25px;color:#217346;transform:scaleX(0.9200);">B</span>
<span class="t" style="left:348.86px;top:215.00px;font-size:25px;color:#217346;transform:scaleX(0.9200);">C</span>
<span class="t" style="left:470.86px;top:215.00px;font-size:25px;color:#217346;transform:scaleX(0.9200);">D</span>
<span class="t" style="left:593.32px;top:215.00px;font-size:25px;color:#217346;transform:scaleX(0.9200);">E</span>
<span class="t" style="left:715.78px;top:215.00px;font-size:25px;color:#217346;transform:scaleX(0.9200);">F</span>
<span class="t" style="left:836.86px;top:215.00px;font-size:25px;color:#222;transform:scaleX(0.9200);">G</span>
<span class="t" style="left:958.86px;top:215.00px;font-size:25px;color:#222;transform:scaleX(0.9200);">H</span>
<span class="t" style="left:1086.38px;top:215.00px;font-size:25px;color:#222;transform:scaleX(0.9200);">I</span>
<span class="t" style="left:1206.20px;top:215.00px;font-size:25px;color:#222;transform:scaleX(0.6727);">J</span>
<span class="t" style="left:19.64px;top:252.00px;font-size:25px;color:#222;transform:scaleX(0.9800);">1</span>
<span class="t" style="left:19.64px;top:290.00px;font-size:25px;color:#222;transform:scaleX(0.9800);">2</span>
<span class="t" style="left:20.13px;top:328.00px;font-size:25px;color:#217346;transform:scaleX(0.9800);">3</span>
<span class="t" style="left:19.64px;top:366.00px;font-size:25px;color:#217346;transform:scaleX(0.9800);">4</span>
<span class="t" style="left:19.64px;top:404.00px;font-size:25px;color:#217346;transform:scaleX(0.9800);">5</span>
<span class="t" style="left:19.64px;top:442.00px;font-size:25px;color:#217346;transform:scaleX(0.9800);">6</span>
<span class="t" style="left:19.64px;top:480.00px;font-size:25px;color:#217346;transform:scaleX(0.9800);">7</span>
<span class="t" style="left:19.64px;top:518.00px;font-size:25px;color:#222;transform:scaleX(0.9800);">8</span>
<span class="t" style="left:19.64px;top:556.00px;font-size:25px;color:#222;transform:scaleX(0.9800);">9</span>
<span class="t" style="left:12.83px;top:594.00px;font-size:25px;color:#222;transform:scaleX(0.9800);">10</span>
<span class="t" style="left:13.74px;top:632.00px;font-size:25px;color:#222;transform:scaleX(0.9800);">11</span>
<span class="t" style="left:12.83px;top:670.00px;font-size:25px;color:#222;transform:scaleX(0.9800);clip-path:inset(0 0 14px 0);">12</span>
<span class="t" style="left:342.34px;top:256.00px;font-size:21.5px;color:#000;transform:scaleX(0.9630);font-weight:700;">Forex Earnings</span>
<span class="t" style="left:218.70px;top:293.00px;font-size:21.5px;color:#000;transform:scaleX(0.8687);font-weight:700;">Jan</span>
<span class="t" style="left:338.36px;top:293.00px;font-size:21.5px;color:#000;transform:scaleX(0.9382);font-weight:700;">Feb</span>
<span class="t" style="left:458.90px;top:293.00px;font-size:21.5px;color:#000;transform:scaleX(1.0035);font-weight:700;">Mar</span>
<span class="t" style="left:584.50px;top:293.00px;font-size:21.5px;color:#000;transform:scaleX(0.9028);font-weight:700;">Apr</span>
<span class="t" style="left:701.80px;top:293.00px;font-size:21.5px;color:#000;transform:scaleX(0.9959);font-weight:700;">May</span>
<span class="t" style="left:54.84px;top:332.00px;font-size:21.5px;color:#000;transform:scaleX(0.9632);">Daniel</span>
<span class="t" style="left:216.84px;top:331.00px;font-size:21.5px;color:#000;transform:scaleX(1.0000);">500</span>
<span class="t" style="left:338.84px;top:331.00px;font-size:21.5px;color:#000;transform:scaleX(1.0000);">450</span>
<span class="t" style="left:457.26px;top:331.00px;font-size:21.5px;color:#000;transform:scaleX(1.0000);">-100</span>
<span class="t" style="left:582.34px;top:331.00px;font-size:21.5px;color:#000;transform:scaleX(1.0000);">700</span>
<span class="t" style="left:707.24px;top:331.00px;font-size:21.5px;color:#000;transform:scaleX(1.0000);">-10</span>
<span class="t" style="left:54.88px;top:370.00px;font-size:21.5px;color:#000;transform:scaleX(0.9186);">Peace</span>
<span class="t" style="left:222.32px;top:369.00px;font-size:21.5px;color:#000;transform:scaleX(1.0000);">20</span>
<span class="t" style="left:338.84px;top:369.00px;font-size:21.5px;color:#000;transform:scaleX(1.0000);">919</span>
<span class="t" style="left:466.82px;top:369.00px;font-size:21.5px;color:#000;transform:scaleX(1.0000);">54</span>
<span class="t" style="left:589.32px;top:369.00px;font-size:21.5px;color:#000;transform:scaleX(1.0000);">39</span>
<span class="t" style="left:704.84px;top:369.00px;font-size:21.5px;color:#000;transform:scaleX(1.0000);">350</span>
<span class="t" style="left:54.67px;top:408.00px;font-size:21.5px;color:#000;transform:scaleX(0.9336);">Chidera</span>
<span class="t" style="left:216.84px;top:407.00px;font-size:21.5px;color:#000;transform:scaleX(1.0000);">340</span>
<span class="t" style="left:344.82px;top:407.00px;font-size:21.5px;color:#000;transform:scaleX(1.0000);">54</span>
<span class="t" style="left:463.74px;top:407.00px;font-size:21.5px;color:#000;transform:scaleX(1.0000);">-67</span>
<span class="t" style="left:588.32px;top:407.00px;font-size:21.5px;color:#000;transform:scaleX(1.0000);">70</span>
<span class="t" style="left:704.84px;top:407.00px;font-size:21.5px;color:#000;transform:scaleX(1.0000);">400</span>
<span class="t" style="left:54.67px;top:446.00px;font-size:21.5px;color:#000;transform:scaleX(0.9266);">Chiamaka</span>
<span class="t" style="left:216.84px;top:445.00px;font-size:21.5px;color:#000;transform:scaleX(1.0000);">500</span>
<span class="t" style="left:341.74px;top:445.00px;font-size:21.5px;color:#000;transform:scaleX(1.0000);">-32</span>
<span class="t" style="left:466.32px;top:445.00px;font-size:21.5px;color:#000;transform:scaleX(1.0000);">26</span>
<span class="t" style="left:579.26px;top:445.00px;font-size:21.5px;color:#000;transform:scaleX(1.0000);">-100</span>
<span class="t" style="left:704.84px;top:445.00px;font-size:21.5px;color:#000;transform:scaleX(1.0000);">450</span>
<span class="t" style="left:54.90px;top:484.00px;font-size:21.5px;color:#000;transform:scaleX(0.9176);">Jude</span>
<span class="t" style="left:216.84px;top:483.00px;font-size:21.5px;color:#000;transform:scaleX(1.0000);">460</span>
<span class="t" style="left:338.84px;top:483.00px;font-size:21.5px;color:#000;transform:scaleX(1.0000);">500</span>
<span class="t" style="left:463.74px;top:483.00px;font-size:21.5px;color:#000;transform:scaleX(1.0000);">-41</span>
<span class="t" style="left:588.32px;top:483.00px;font-size:21.5px;color:#000;transform:scaleX(1.0000);">60</span>
<span class="t" style="left:710.82px;top:483.00px;font-size:21.5px;color:#000;transform:scaleX(1.0000);">43</span>
<span class="t" style="left:904.20px;top:470.00px;font-size:25px;color:#000;transform:scaleX(0.9677);font-weight:700;">Sparklines Group</span>
<span class="t" style="left:114.20px;top:685.00px;font-size:12.5px;color:#444;transform:scaleX(0.9580);">Sheet1</span>
<span class="t" style="left:179.70px;top:685.00px;font-size:12.5px;color:#444;transform:scaleX(0.9555);">Sheet2</span>
<span class="t" style="left:243.40px;top:685.00px;font-size:12.5px;color:#217346;transform:scaleX(0.9820);font-weight:700;">Sheet3</span>
<span class="t" style="left:9.60px;top:711.00px;font-size:11.5px;color:#444;transform:scaleX(0.9017);">Ready</span>
<span class="t" style="left:55.60px;top:711.00px;font-size:11.5px;color:#444;transform:scaleX(1.0127);">Workbook Statistics</span>
<span class="t" style="left:196.40px;top:711.00px;font-size:11.5px;color:#444;transform:scaleX(0.9860);">Accessibility: Investigate</span>
<span class="t" style="left:714.40px;top:711.00px;font-size:11.5px;color:#444;transform:scaleX(0.9414);">Average: 223.4</span>
<span class="t" style="left:805.00px;top:711.00px;font-size:11.5px;color:#444;transform:scaleX(0.9904);">Count: 30</span>
<span class="t" style="left:870.80px;top:711.00px;font-size:11.5px;color:#444;transform:scaleX(0.9290);">Sum: 5585</span>
<span class="t" style="left:1206.20px;top:711.00px;font-size:11.5px;color:#444;transform:scaleX(0.8874);">190%</span>
</body></html>
